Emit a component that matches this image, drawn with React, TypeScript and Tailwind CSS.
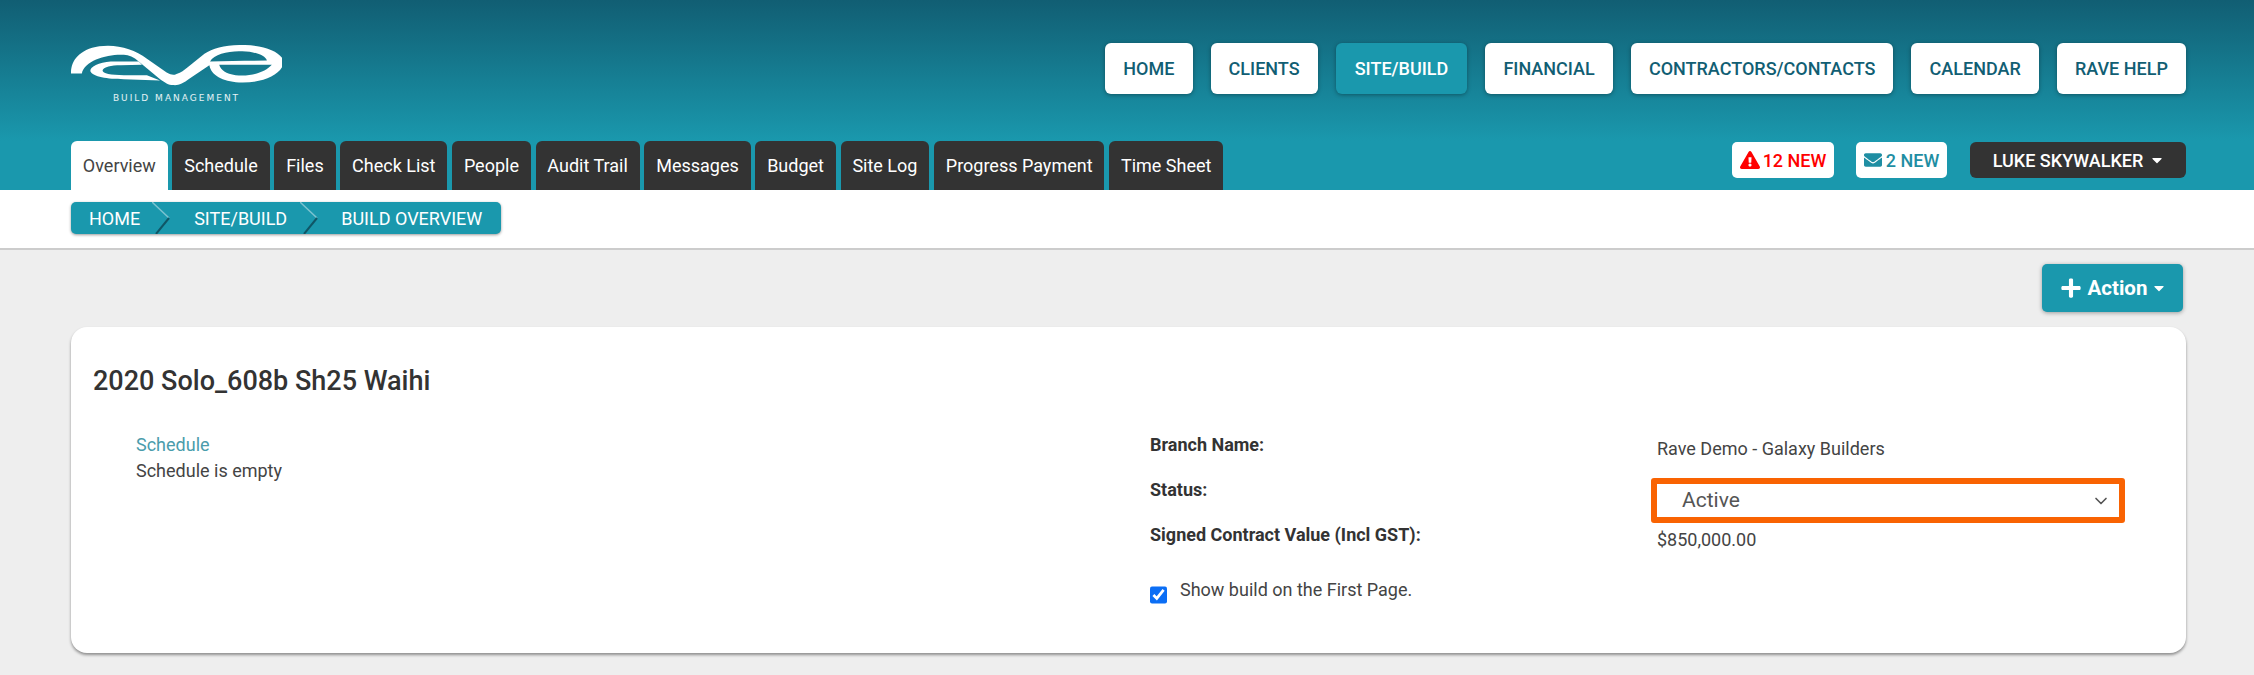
import { FaCaretDown, FaEnvelope, FaExclamationTriangle, FaPlus } from "react-icons/fa";
import { ChevronDown } from "lucide-react";

const navItems = ["HOME", "CLIENTS", "SITE/BUILD", "FINANCIAL", "CONTRACTORS/CONTACTS", "CALENDAR", "RAVE HELP"];

const tabs = [
  "Overview",
  "Schedule",
  "Files",
  "Check List",
  "People",
  "Audit Trail",
  "Messages",
  "Budget",
  "Site Log",
  "Progress Payment",
  "Time Sheet",
];

function Logo() {
  return (
    <div className="flex w-[211px] flex-col items-center pt-[2px]">
      <svg viewBox="9 9 642 126" className="h-[42px] w-[211px]" fill="#fff">
        <path
          fillRule="evenodd"
          d="M9 95 C8 60 30 22 95 12 C150 5 200 20 240 50 L300 92 C315 100 322 100 330 96 C345 92 352 85 365 75 L415 35 C440 18 480 8 530 8 C600 8 650 30 657 60 C650 100 590 125 520 122 C470 120 435 100 430 70 L370 110 C350 125 335 132 320 130 C305 130 295 122 280 112 L215 58 C200 45 185 38 170 38 C120 35 50 55 42 95 Z M432 58 C445 35 490 25 530 27 C570 28 600 40 605 55 Z M460 68 L620 68 C600 90 560 105 510 100 C480 95 465 85 460 68 Z"
        />
        <path
          fillRule="evenodd"
          d="M215 58 L130 58 C95 60 65 75 68 88 C75 105 120 112 170 112 L280 116 L240 100 L170 100 C130 100 105 95 105 85 C110 75 130 70 160 70 L225 68 Z"
        />
      </svg>
      <span className="mt-[6px] font-['DejaVu_Sans',sans-serif] text-[9px] leading-[10px] tracking-[2px] whitespace-nowrap text-white/90">
        BUILD MANAGEMENT
      </span>
    </div>
  );
}

function CrumbArrow() {
  return (
    <svg viewBox="0 0 18 32" className="h-[32px] w-[18px] shrink-0" fill="none">
      <path d="M0 0 L17 16" stroke="#7cc3d0" strokeWidth="1.5" />
      <path d="M17 16 L4 32" stroke="#0f5666" strokeWidth="2" />
    </svg>
  );
}

export default function App() {
  return (
    <div className="min-h-[675px] bg-[#eeeeee] font-['Roboto',sans-serif] text-[#444444]">
      <header className="flex h-[190px] flex-col justify-between bg-[linear-gradient(180deg,#115e73_0%,#1a98ad_74%,#1a98ad_100%)] px-[68px] pt-[43px]">
        <div className="flex items-start justify-between pl-[3px]">
          <Logo />
          <nav className="flex gap-[18px]">
            {navItems.map((item) => (
              <a
                key={item}
                className={
                  item === "SITE/BUILD"
                    ? "flex h-[51px] items-center rounded-[6px] bg-[#1a98ad] px-[19px] text-[18px] font-medium text-white shadow-[0_1px_4px_rgba(0,0,0,0.35)]"
                    : "flex h-[51px] items-center rounded-[6px] bg-white px-[18.1px] text-[18px] font-medium text-[#115e73] shadow-[0_1px_4px_rgba(0,0,0,0.35)]"
                }
              >
                {item}
              </a>
            ))}
          </nav>
        </div>
        <div className="flex items-end justify-between pl-[3px]">
          <div className="flex gap-[4.7px]">
            {tabs.map((tab) => (
              <a
                key={tab}
                className={
                  tab === "Overview"
                    ? "flex h-[49px] items-center rounded-t-[6px] bg-white px-[11.85px] text-[18px] text-[#444444]"
                    : "flex h-[49px] items-center rounded-t-[6px] bg-[#333333] px-[11.85px] text-[18px] text-white"
                }
              >
                {tab}
              </a>
            ))}
          </div>
          <div className="mb-[12px] flex items-center">
            <span className="flex h-[36px] w-[102px] items-center justify-center gap-[3px] rounded-[5px] bg-white text-[18px] font-medium text-[#ff0000]">
              <FaExclamationTriangle className="h-[18px] w-[20px]" />
              12 NEW
            </span>
            <span className="ml-[22px] flex h-[36px] w-[91px] items-center justify-center gap-[4px] rounded-[5px] bg-white text-[18px] font-medium text-[#1f8ea3]">
              <FaEnvelope className="h-[18px] w-[18px]" />
              2 NEW
            </span>
            <button className="ml-[23px] flex h-[36px] w-[216px] items-center justify-center gap-[8px] rounded-[6px] bg-[#333333] text-[18px] font-medium text-white">
              LUKE SKYWALKER
              <FaCaretDown className="h-[16px] w-[12px]" />
            </button>
          </div>
        </div>
      </header>

      <div className="flex h-[60px] items-start border-b-2 border-[#cccccc] bg-white px-[71px] pt-[12px]">
        <div className="flex h-[32px] items-center rounded-[5px] bg-[#1a98ad] pr-[19px] pl-[18px] text-[18px] text-white shadow-[0_1px_3px_rgba(0,0,0,0.4)]">
          <span>HOME</span>
          <span className="ml-[12px]">
            <CrumbArrow />
          </span>
          <span className="ml-[24px]">SITE/BUILD</span>
          <span className="ml-[13px]">
            <CrumbArrow />
          </span>
          <span className="ml-[23px]">BUILD OVERVIEW</span>
        </div>
      </div>

      <main className="pr-[68px] pl-[71px]">
        <div className="flex justify-end pt-[14px] pr-[3px]">
          <button className="flex h-[48px] w-[141px] items-center justify-center gap-[6px] rounded-[5px] bg-[#1a98ad] text-[20.5px] font-bold text-white shadow-[0_1px_4px_rgba(0,0,0,0.35)]">
            <FaPlus className="h-[22px] w-[22px]" />
            Action
            <FaCaretDown className="h-[16px] w-[12px]" />
          </button>
        </div>

        <section className="mt-[15px] h-[326px] rounded-[16px] bg-white px-[22px] pt-[38px] shadow-[0_2px_3px_rgba(0,0,0,0.4)]">
          <h1 className="text-[27px] leading-[32px] font-medium text-[#333333]">2020 Solo_608b Sh25 Waihi</h1>
          <div className="mt-[35px] flex">
            <div className="ml-[43px] w-[1014px] text-[18px] leading-[26px]">
              <a className="block text-[#4a9cab]">Schedule</a>
              <p>Schedule is empty</p>
            </div>
            <div className="flex text-[18px]">
              <div className="w-[501px]">
                <p className="leading-[26px] font-bold text-[#333333]">Branch Name:</p>
                <p className="mt-[19px] leading-[26px] font-bold text-[#333333]">Status:</p>
                <p className="mt-[19px] leading-[26px] font-bold text-[#333333]">Signed Contract Value (Incl GST):</p>
                <label className="mt-[28px] flex items-start gap-[13px]">
                  <input type="checkbox" defaultChecked className="mt-[10px] h-[18px] w-[17px] accent-[#0b6ef5]" />
                  Show build on the First Page.
                </label>
              </div>
              <div className="w-[474px]">
                <p className="pt-[4px] pl-[6px] leading-[26px]">Rave Demo - Galaxy Builders</p>
                <div className="mt-[16px] flex h-[45px] items-center justify-between rounded-[3px] border-[6px] border-[#f96302] pr-[8px] pl-[25px] text-[21px] text-[#555555]">
                  Active
                  <ChevronDown className="h-[20px] w-[20px]" strokeWidth={2} />
                </div>
                <p className="mt-[4px] pl-[6px] leading-[26px]">$850,000.00</p>
              </div>
            </div>
          </div>
        </section>
      </main>
    </div>
  );
}
